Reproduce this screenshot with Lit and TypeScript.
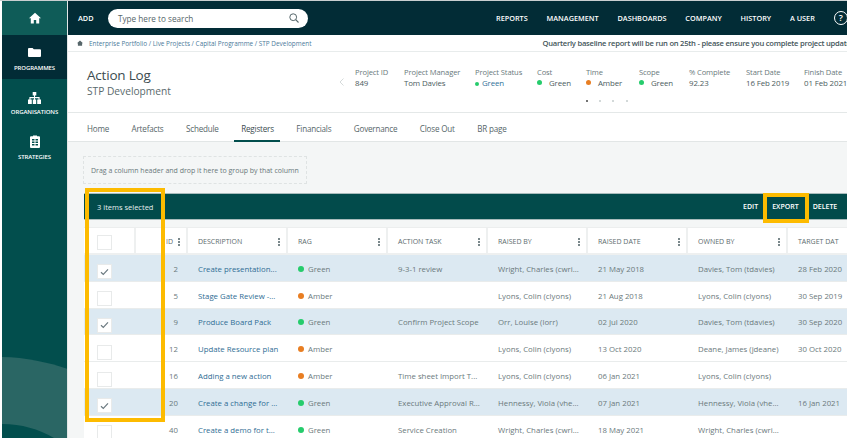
import { LitElement, html, css, svg } from "lit";
import { customElement } from "lit/decorators.js";

type Row = [boolean, string, string, string, string, string, string, string, string];
const rows: Row[] = [
  [true, "2", "Create presentation...", "Green", "9-3-1 review", "Wright, Charles (cwri...", "21 May 2018", "Davies, Tom (tdavies)", "28 Feb 2020"],
  [false, "5", "Stage Gate Review -...", "Amber", "", "Lyons, Colin (clyons)", "21 Aug 2018", "Lyons, Colin (clyons)", "30 Sep 2019"],
  [true, "9", "Produce Board Pack", "Green", "Confirm Project Scope", "Orr, Louise (lorr)", "02 Jul 2020", "Davies, Tom (tdavies)", "30 Sep 2020"],
  [false, "12", "Update Resource plan", "Amber", "", "Lyons, Colin (clyons)", "13 Oct 2020", "Deane, James (jdeane)", "30 Oct 2020"],
  [false, "16", "Adding a new action", "Amber", "Time sheet Import T...", "Lyons, Colin (clyons)", "06 Jan 2021", "Lyons, Colin (clyons)", ""],
  [true, "20", "Create a change for ...", "Green", "Executive Approval R...", "Hennessy, Viola (vhe...", "07 Jan 2021", "Hennessy, Viola (vhe...", "16 Jan 2021"],
  [false, "40", "Create a demo for t...", "Green", "Service Creation", "Wright, Charles (cwri...", "18 May 2021", "Wright, Charles (cwri...", ""],
];
const heads = ["DESCRIPTION", "RAG", "ACTION TASK", "RAISED BY", "RAISED DATE", "OWNED BY"];
const nav = ["REPORTS", "MANAGEMENT", "DASHBOARDS", "COMPANY", "HISTORY", "A USER"];
const tabs = ["Home", "Artefacts", "Schedule", "Registers", "Financials", "Governance", "Close Out", "BR page"];
const fields: [string, string, string, number][] = [
  ["Project ID", "849", "", 49],
  ["Project Manager", "Tom Davies", "", 71],
  ["Project Status", "Green", "link", 62],
  ["Cost", "Green", "g", 49],
  ["Time", "Amber", "a", 53],
  ["Scope", "Green", "g", 50],
  ["% Complete", "92.23", "", 57],
  ["Start Date", "16 Feb 2019", "", 58],
  ["Finish Date", "01 Feb 2021", "", 60],
];

@customElement("app-root")
export class AppRoot extends LitElement {
  static styles = css`
    :host { display: block; width: 847px; height: 438px; overflow: hidden; position: relative; background: #fff;
      font-family: "Open Sans", "Noto Sans", sans-serif; color: #5a6a6d; }
    * { box-sizing: border-box; }
    .app { display: flex; height: 438px; padding: 1px 0 0 2px; background: linear-gradient(#c9cfd0 1px, #fff 1px); }
    .side { width: 66px; flex: none; background: #024e4d; position: relative; overflow: hidden; border-right: 1px solid #e3e7e7; }
    .home { height: 34px; background: #0f5c58; display: flex; align-items: center; justify-content: center; }
    .sitem { display: flex; flex-direction: column; align-items: center; height: 44px; color: #fff; font-size: 6px; font-weight: 600; letter-spacing: -0.1px; }
    .sitem.active { background: #022c36; padding-top: 13px; gap: 7px; }
    .sitem.org { padding-top: 13px; gap: 4px; }
    .sitem.str { padding-top: 12px; gap: 5px; }
    .wave { position: absolute; left: 0; bottom: 0; width: 66px; height: 81px; }
    .main { flex: 1; min-width: 0; display: flex; flex-direction: column; background: #f4f6f6; }
    .top { height: 34px; background: #022c36; display: flex; align-items: center; color: #fff; font-size: 7.3px; font-weight: 600; padding-left: 10px; flex: none; white-space: nowrap; overflow: hidden; }
    .add { width: 30px; flex: none; }
    .search { width: 200px; height: 19px; flex: none; border-radius: 10px; background: #fff; display: flex; align-items: center; justify-content: space-between; padding: 0 9px 0 10px; color: #56666a; font-size: 8.2px; font-weight: 400; }
    .nav { display: flex; gap: 18.8px; margin-left: 188px; flex: none; }
    .help { margin-left: 19px; width: 14px; height: 14px; border: 1.5px solid #fff; border-radius: 50%; font-size: 9px; line-height: 11px; text-align: center; flex: none; }
    .crumb { height: 17px; background: #fff; border-bottom: 1px solid #e8ecec; display: flex; align-items: center; padding-left: 9px; font-size: 6.4px; color: #4a7a9a; white-space: nowrap; flex: none; overflow: hidden; }
    .crumb svg { margin-right: 6px; flex: none; }
    .msg { margin-left: 231px; font-size: 7.6px; font-weight: 600; color: #44555a; letter-spacing: -0.23px; }
    .head { height: 61px; background: #fff; border-bottom: 1px solid #e4e8e8; display: flex; flex: none; padding-left: 19px; white-space: nowrap; overflow: hidden; }
    .title { width: 252px; flex: none; padding-top: 14px; }
    .title h1 { margin: 0; font-size: 13.5px; line-height: 19px; font-weight: 400; color: #3c4c50; letter-spacing: -0.2px; }
    .title p { margin: 0; font-size: 10.2px; line-height: 13px; color: #5a6a6d; }
    .fields { flex: none; padding-top: 15px; }
    .frow { display: flex; align-items: flex-start; }
    .chev { width: 16px; flex: none; padding-top: 2px; }
    .field { font-size: 7.6px; letter-spacing: -0.12px; line-height: 11px; flex: none; color: #6a797c; }
    .field div + div { color: #4c5c60; font-size: 7.9px; }
    .val-g, .val-a { display: flex; align-items: center; gap: 7px; }
    .dot { width: 5px; height: 5px; border-radius: 50%; display: inline-block; flex: none; }
    .g { background: #26cc6c; }
    .a { background: #e87e22; }
    .val-g .dot, .val-a .dot { margin-top: -3px; }
    .val-link { display: flex; align-items: center; gap: 3px; }
    .field .val-link { color: #2f7299; }
    .val-link .dot { width: 4px; height: 4px; }
    .pager { display: flex; gap: 11.2px; margin: 9px 0 0 247px; }
    .pager i { width: 2px; height: 2px; border-radius: 50%; background: #c4cccc; }
    .pager i:first-child { background: #444; }
    .tabs { height: 29px; background: #fff; border-bottom: 1px solid #e2e6e6; display: flex; gap: 22.5px; padding-left: 19px; font-size: 8.1px; letter-spacing: -0.2px; flex: none; color: #566669; white-space: nowrap; }
    .tab { height: 28px; padding-top: 10px; position: relative; }
    .tab.on { color: #3c4c50; }
    .tab.on::after { content: ""; position: absolute; left: -7px; right: -6px; bottom: -1px; height: 2px; background: #024e4d; }
    .body { flex: 1; padding: 14px 0 0 15px; overflow: hidden; }
    .drop { width: 224px; height: 28px; border: 1px dashed #dfe3e3; display: flex; align-items: center; padding-left: 7px; font-size: 7px; color: #6a787b; white-space: nowrap; }
    .bar { margin-top: 9px; margin-left: 1px; height: 27px; background: #024b4b; border-top: 1px solid #a9bcbc; border-bottom: 1px solid #a9bcbc; display: flex; align-items: center; color: #fff; font-size: 7px; font-weight: 600; padding-left: 13px; }
    .sel { font-size: 7.5px; font-weight: 400; flex: 1; color: #e6efef; }
    .acts { display: flex; gap: 14px; width: 104px; flex: none; }
    .grid { display: grid; grid-template-columns: 52px 52px 100px 100px 100px 100px 100px 100px 1fr; margin-left: 1px; }
    .thead { margin-top: 7px; height: 28px; background: #fff; border-top: 1px solid #eceeee; border-bottom: 2px solid #eef0f0; font-size: 7px; color: #5c6b6e; }
    .th { display: flex; align-items: center; justify-content: space-between; padding: 2px 6px 0 10px; border-right: 2px solid #eef0f0; white-space: nowrap; overflow: hidden; }
    .th.idh { justify-content: flex-end; gap: 5px; padding-right: 6px; }
    .th.last { border: none; }
    .kebab { width: 2px; height: 8px; flex: none; background: radial-gradient(circle at 1px 1px, #7a888b .8px, transparent 1px) 0 0 / 2px 3px; }
    .row { height: 26.8px; padding-top: 2px; background: #fff; border-bottom: 1px solid #e9ecec; font-size: 7.8px; color: #6b797c; align-items: center; white-space: nowrap; }
    .row.sel-row { background: #dce9f2; }
    .cell { padding-left: 10px; overflow: hidden; }
    .cid { padding: 0 10px 0 0; text-align: right; }
    .cdesc { color: #2f6d94; font-weight: 500; }
    .crag { display: flex; align-items: center; gap: 4px; }
    .crag .dot { width: 6px; height: 6px; }
    .cbw { padding-left: 13px; display: flex; }
    .cb { width: 15px; height: 15px; background: #fff; border: 1px solid #e8eaea; display: flex; align-items: center; justify-content: center; margin-top: 6px; }
    .thcb { display: flex; align-items: center; padding-left: 13px; border-right: 2px solid #eef0f0; }
    .thcb .cb { margin: 3px 0 0; }
    .mark { position: absolute; border: 4px solid #fdbb00; pointer-events: none; }
    .m1 { left: 85px; top: 188px; width: 80px; height: 234px; }
    .m2 { left: 763px; top: 193px; width: 46px; height: 30px; }
  `;

  private dot(c: string) {
    return html`<span class="dot ${c === "Green" ? "g" : "a"}"></span>`;
  }

  render() {
    const check = svg`<svg width="9" height="8" viewBox="0 0 9 8"><path d="M1 4.2 3.3 6.4 8 1.4" fill="none" stroke="#6b7a80" stroke-width="1.2"/></svg>`;
    return html`
      <div class="app">
        <aside class="side">
          <div class="home">
            <svg width="12" height="12" viewBox="0 0 12 12"><path fill="#fff" d="M6 .8 0 6.3h1.8V11.4h3V8h2.4v3.4h3V6.3H12Z"/></svg>
          </div>
          <div class="sitem active">
            <svg width="13" height="9" viewBox="0 0 13 10" preserveAspectRatio="none"><path fill="#fff" d="M0 1a1 1 0 0 1 1-1h3.6l1.2 1.4H12a1 1 0 0 1 1 1V9a1 1 0 0 1-1 1H1a1 1 0 0 1-1-1Z"/></svg>
            <span>PROGRAMMES</span>
          </div>
          <div class="sitem org">
            <svg width="13" height="12" viewBox="0 0 13 12"><path fill="#fff" d="M4.7 0h3.6v3.4H7v1.7h4.6v2.4H13V12H9.2V7.5h1.3V6.2H7v1.3h1.2V12H4.8V7.5H6V6.2H2.500v1.300h1.300V12H0V7.500h1.400V5.100H6V3.400H4.700Z"/></svg>
            <span>ORGANISATIONS</span>
          </div>
          <div class="sitem str">
            <svg width="10" height="13" viewBox="0 0 10 13"><path fill="#fff" fill-rule="evenodd" d="M1 1.300h2V.5h4v.8h2a1 1 0 0 1 1 1V12a1 1 0 0 1-1 1H1a1 1 0 0 1-1-1V2.300a1 1 0 0 1 1-1ZM2 4v1.500h2.500V4Zm3.500 0v1.500H8V4ZM2 6.500V8h2.500V6.500Zm3.500 0V8H8V6.500ZM2 9v1.500h2.500V9Zm3.500 0v1.500H8V9Z"/></svg>
            <span>STRATEGIES</span>
          </div>
          <svg class="wave" viewBox="0 0 66 81" preserveAspectRatio="none">
            <path fill="#2a6664" d="M0 0C24 0 48 6 66 12V81H0Z"/>
            <path fill="#024e4d" d="M0 67C20 67 36 72 52 81H0Z"/>
          </svg>
        </aside>
        <div class="main">
          <div class="top">
            <div class="add">ADD</div>
            <div class="search">
              <span>Type here to search</span>
              <svg width="10" height="10" viewBox="0 0 10 10"><circle cx="4.200" cy="4.200" r="3.400" fill="none" stroke="#55666a" stroke-width="1"/><path d="m6.700 6.700 2.800 2.800" stroke="#55666a" stroke-width="1.100"/></svg>
            </div>
            <div class="nav">${nav.map((n) => html`<span>${n}</span>`)}</div>
            <div class="help">?</div>
          </div>
          <div class="crumb">
            <svg width="6" height="6" viewBox="0 0 12 12"><path fill="#56666a" d="M6 .8 0 6.300h1.800V11.400h8.400V6.300H12Z"/></svg>
            <span>Enterprise Portfolio / Live Projects / Capital Programme / STP Development</span>
            <span class="msg">Quarterly baseline report will be run on 25th - please ensure you complete project updates</span>
          </div>
          <div class="head">
            <div class="title"><h1>Action Log</h1><p>STP Development</p></div>
            <div class="fields">
              <div class="frow">
                <div class="chev"><svg width="5" height="8" viewBox="0 0 5 8"><path d="M4.500.5 1 4l3.500 3.500" fill="none" stroke="#d5dada" stroke-width="1"/></svg></div>
                ${fields.map(([l, v, k, w]) => html`
                  <div class="field" style="width:${w}px">
                    <div>${l}</div>
                    ${k === "link"
                      ? html`<div class="val-link"><span class="dot g"></span>${v}</div>`
                      : k
                        ? html`<div class="val-${k}"><span class="dot ${k}"></span>${v}</div>`
                        : html`<div>${v}</div>`}
                  </div>`)}
              </div>
              <div class="pager"><i></i><i></i><i></i><i></i></div>
            </div>
          </div>
          <div class="tabs">
            ${tabs.map((t) => html`<div class="tab ${t === "Registers" ? "on" : ""}">${t}</div>`)}
          </div>
          <div class="body">
            <div class="drop">Drag a column header and drop it here to group by that column</div>
            <div class="bar">
              <div class="sel">3 items selected</div>
              <div class="acts"><span>EDIT</span><span>EXPORT</span><span>DELETE</span></div>
            </div>
            <div class="grid thead">
              <div class="thcb"><div class="cb"></div></div>
              <div class="th idh"><span>ID</span><i class="kebab"></i></div>
              ${heads.map((h) => html`<div class="th"><span>${h}</span><i class="kebab"></i></div>`)}
              <div class="th last"><span>TARGET DAT</span></div>
            </div>
            ${rows.map((r) => html`
              <div class="grid row ${r[0] ? "sel-row" : ""}">
                <div class="cbw"><div class="cb">${r[0] ? check : ""}</div></div>
                <div class="cell cid">${r[1]}</div>
                <div class="cell cdesc">${r[2]}</div>
                <div class="cell crag">${this.dot(r[3])}<span>${r[3]}</span></div>
                <div class="cell">${r[4]}</div>
                <div class="cell">${r[5]}</div>
                <div class="cell">${r[6]}</div>
                <div class="cell">${r[7]}</div>
                <div class="cell">${r[8]}</div>
              </div>`)}
          </div>
        </div>
      </div>
      <div class="mark m1"></div>
      <div class="mark m2"></div>
    `;
  }
}
